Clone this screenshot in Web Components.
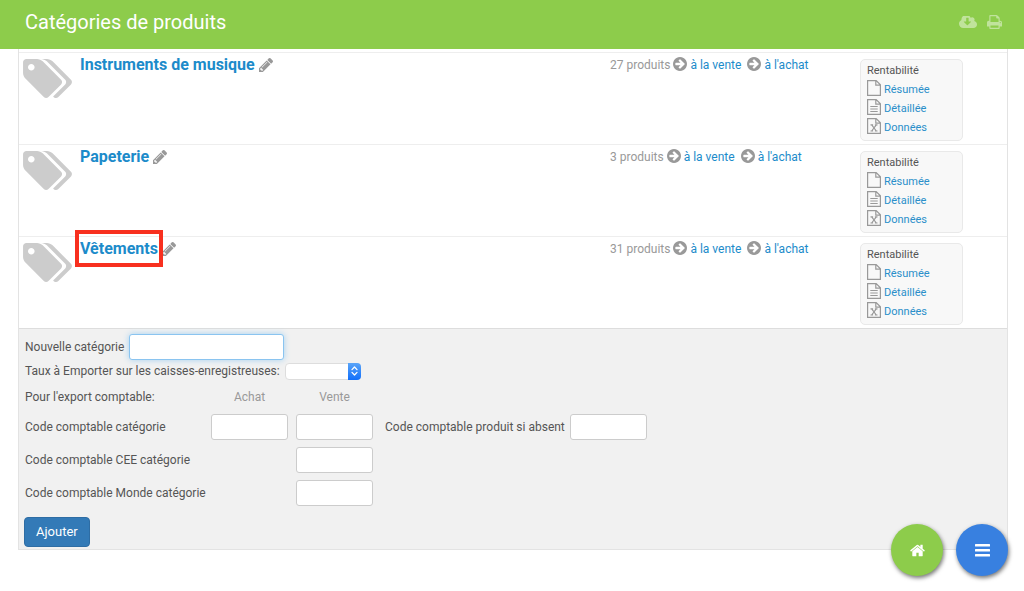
<!DOCTYPE html>
<html lang="fr">
<head>
<meta charset="utf-8">
<meta name="viewport" content="width=device-width, initial-scale=1">
<title>Catégories de produits</title>
<style>
  html { background: #fff; }
  body { margin: 0; font: 12px/20px Roboto, "Liberation Sans", sans-serif; color: #555; }
</style>
</head>
<body>
<category-page></category-page>

<script>
const ICONS = {
  tags: ['128 128 1899 1515', '<path d="M576 448q0-53-37.500-90.500t-90.500-37.500-90.500 37.500-37.500 90.500 37.500 90.500 90.500 37.500 90.500-37.500 37.500-90.500zm1067 576q0 53-37 90l-491 492q-39 37-91 37-53 0-90-37l-715-716q-38-37-64.500-101t-26.500-117v-416q0-52 38-90t90-38h416q53 0 117 26.500t102 64.500l715 714q37 39 37 91zm384 0q0 53-37 90l-491 492q-39 37-91 37-36 0-59-14t-53-45l470-470q37-37 37-90 0-52-37-91l-715-714q-38-38-102-64.500t-117-26.500h224q53 0 117 26.500t102 64.500l715 714q37 39 37 91z"/>'],
  pencil: ['128 149 1515 1515', '<path d="M491 1536l91-91-235-235-91 91v107h128v128h107zm523-928q0-22-22-22-10 0-17 7l-542 542q-7 7-7 17 0 22 22 22 10 0 17-7l542-542q7-7 7-17zm-54-192l416 416-832 832h-416v-416zm683 96q0 53-37 90l-166 166-416-416 166-165q36-38 90-38 53 0 91 38l235 234q37 39 37 91z"/>'],
  arrow: ['128 128 1536 1536', '<path d="M1413 896q0-27-18-45l-91-91-362-362q-18-18-45-18t-45 18l-91 91q-18 18-18 45t18 45l189 189h-502q-26 0-45 19t-19 45v128q0 26 19 45t45 19h502l-189 189q-19 19-19 45t19 45l91 91q18 18 45 18t45-18l362-362 91-91q18-18 18-45zm251 0q0 209-103 385.500t-279.500 279.500-385.500 103-385.500-103-279.500-279.500-103-385.500 103-385.500 279.500-279.500 385.500-103 385.500 103 279.500 279.500 103 385.500z"/>'],
  home: ['64 192 1664 1408', '<path d="M1472 992v480q0 26-19 45t-45 19h-384v-384h-256v384h-384q-26 0-45-19t-19-45v-480q0-1 .5-3t.5-3l575-474 575 474q1 2 1 6zm223-69l-62 74q-8 9-21 11h-3q-13 0-21-7l-692-577-692 577q-12 8-24 7-13-2-21-11l-62-74q-8-10-7-23.500t11-21.500l719-599q32-26 76-26t76 26l244 204v-195q0-14 9-23t23-9h192q14 0 23 9t9 23v408l219 182q10 8 11 21.500t-7 23.500z"/>'],
  bars: ['0 0 15 13', '<rect width="15" height="2.6" rx=".5"/><rect y="5" width="15" height="2.6" rx=".5"/><rect y="10" width="15" height="2.6" rx=".5"/>'],
  cloud: ['64 256 1920 1280', '<path d="M1344 864q0-14-9-23t-23-9h-224v-352q0-13-9.500-22.500t-22.500-9.500h-192q-13 0-22.500 9.500t-9.500 22.500v352h-224q-13 0-22.500 9.500t-9.500 22.500q0 14 9 23l352 352q9 9 23 9t23-9l351-351q10-12 10-24zm640 288q0 159-112.500 271.500t-271.500 112.500h-1088q-185 0-316.500-131.500t-131.500-316.500q0-130 70-240t188-165q-2-30-2-43 0-212 150-362t362-150q156 0 285.500 87t188.500 231q71-62 166-62 106 0 181 75t75 181q0 76-41 138 130 31 213.500 135.500t83.500 238.500z"/>'],
  print: ['64 128 1664 1536', '<path d="M448 1536h896v-256h-896v256zm0-640h896v-384h-160q-40 0-68-28t-28-68v-160h-640v640zm1152 64q0-26-19-45t-45-19-45 19-19 45 19 45 45 19 45-19 19-45zm128 0v416q0 13-9.500 22.500t-22.500 9.500h-224v160q0 40-28 68t-68 28h-960q-40 0-68-28t-28-68v-160h-224q-13 0-22.500-9.500t-9.500-22.500v-416q0-79 56.500-135.500t135.500-56.500h64v-544q0-40 28-68t68-28h672q40 0 88 20t76 48l152 152q28 28 48 76t20 88v256h64q79 0 135.500 56.500t56.500 135.500z"/>'],
  file: ['0 0 14 16', '<g fill="none" stroke="currentColor" stroke-width="1.2"><path d="M.6.6h8.600l4.200 4.200v10.600H.6zM8.800.6v4.600h4.600"/></g>'],
  lines: ['0 0 14 16', '<g fill="none" stroke="currentColor" stroke-width="1.2"><path d="M.6.6h8.600l4.200 4.200v10.600H.6zM8.800.6v4.600h4.600M3.300 7.500h7.400M3.300 10h7.400M3.300 12.500h7.400"/></g>'],
  sheet: ['0 0 14 16', '<g fill="none" stroke="currentColor" stroke-width="1.2"><path d="M.6.6h8.600l4.200 4.200v10.600H.6zM8.800.6v4.600h4.600"/><path d="M4.700 6.800l4.600 6.200M9.300 6.800l-4.600 6.200M3.500 6.800h2.600M7.900 6.800h2.600M3.500 13h2.600M7.900 13h2.600"/></g>'],
  updown: ['0 0 7 10', '<path fill="none" stroke="currentColor" stroke-width="1.300" stroke-linecap="round" stroke-linejoin="round" d="M1 3.600l2.500-2.600 2.500 2.600M1 6.400l2.500 2.600 2.500-2.600"/>']
};

class AppIcon extends HTMLElement {
  connectedCallback() {
    if (this.shadowRoot) return;
    const [box, art] = ICONS[this.getAttribute('name')];
    this.attachShadow({ mode: 'open' }).innerHTML = `
      <style>
        :host { display: inline-block; width: 14px; height: 14px; flex: none; }
        svg { display: block; width: 100%; height: 100%; fill: currentColor; }
      </style>
      <svg viewBox="${box}" aria-hidden="true">${art}</svg>`;
  }
}

class PageHeader extends HTMLElement {
  constructor() {
    super();
    this.attachShadow({ mode: 'open' }).innerHTML = `
      <style>
        :host { display: flex; align-items: center; justify-content: space-between; box-sizing: border-box;
                min-height: 49px; padding: 0 22px 6px 25px; background: #8dcc4b; color: #fff; }
        h1 { margin: 0; font-size: 20px; line-height: 28px; font-weight: 400; }
        nav { display: flex; align-items: center; gap: 10px; }
        button { display: flex; padding: 0; border: 0; background: none; color: #fff; opacity: .45; cursor: pointer; }
        .cloud { width: 18px; height: 12px; }
        .print { width: 15px; height: 14px; }
      </style>
      <h1><slot></slot></h1>
      <nav>
        <button type="button" aria-label="Télécharger"><app-icon class="cloud" name="cloud"></app-icon></button>
        <button type="button" aria-label="Imprimer"><app-icon class="print" name="print"></app-icon></button>
      </nav>`;
  }
}

class ReportCard extends HTMLElement {
  constructor() {
    super();
    this.attachShadow({ mode: 'open' }).innerHTML = `
      <style>
        :host { display: block; box-sizing: border-box; width: 103px; padding: 2px 6px 3px;
                border: 1px solid #e9e9e9; border-radius: 5px; background: #f8f8f8; font-size: 11px; }
        h3 { margin: 0; font-size: 11px; line-height: 18px; font-weight: 400; color: #555; }
        ul { margin: 0; padding: 0; list-style: none; }
        li { display: flex; align-items: center; gap: 3px; line-height: 19px; height: 19px; color: #999; }
        app-icon { width: 14px; height: 16px; margin-bottom: 3px; }
        a { color: #2a8fca; text-decoration: none; }
      </style>
      <h3>Rentabilité</h3>
      <ul>
        <li><app-icon name="file"></app-icon><a href="#resume">Résumée</a></li>
        <li><app-icon name="lines"></app-icon><a href="#detail">Détaillée</a></li>
        <li><app-icon name="sheet"></app-icon><a href="#donnees">Données</a></li>
      </ul>`;
  }
}

class CategoryRow extends HTMLElement {
  connectedCallback() {
    if (this.shadowRoot) return;
    this.attachShadow({ mode: 'open' }).innerHTML = `
      <style>
        :host { display: grid; grid-template-columns: 61px 1fr 250px 147px; box-sizing: border-box;
                min-height: 92px; border-top: 1px solid #eee; }
        .tags { width: 49px; height: 39px; margin: 6px 0 0 4px; color: #ccc; }
        .name { display: flex; align-items: center; gap: 4px; height: 24px; color: #999; }
        h2 { position: relative; margin: 0; font-size: 16px; line-height: 24px; font-weight: 700; }
        :host([highlighted]) h2::after { content: ""; position: absolute; inset: -7px -5px -6px -5px;
                border: 4px solid #f8301f; z-index: 1; }
        a { color: #1c8bca; text-decoration: none; }
        .counts { display: flex; align-items: center; height: 24px; gap: 3px; color: #999; }
        .counts app-icon { margin-bottom: 3px; }
        .counts a + app-icon { margin-left: 3px; }
        button { display: flex; padding: 0; border: 0; background: none; color: inherit; cursor: pointer; }
        report-card { margin-top: 6px; align-self: start; }
      </style>
      <app-icon class="tags" name="tags"></app-icon>
      <div class="name">
        <h2><a href="#categorie"><slot></slot></a></h2>
        <button type="button" aria-label="Modifier"><app-icon name="pencil"></app-icon></button>
      </div>
      <div class="counts">
        <span>${this.getAttribute('count')} produits</span>
        <app-icon name="arrow"></app-icon><a href="#vente">à la vente</a>
        <app-icon name="arrow"></app-icon><a href="#achat">à l'achat</a>
      </div>
      <report-card></report-card>`;
  }
}

class CategoryForm extends HTMLElement {
  constructor() {
    super();
    this.attachShadow({ mode: 'open' }).innerHTML = `
      <style>
        :host { display: block; border-top: 1px solid #ddd; background: #f1f1f1; }
        form { padding: 5px 6px 2px; }
        label { white-space: nowrap; }
        .line { display: flex; align-items: center; gap: 5px; }
        input { box-sizing: border-box; width: 77px; height: 26px; margin: 0; padding: 2px 6px; border: 1px solid #ccc;
                border-radius: 3px; background: #fff; font: inherit; color: inherit; outline: none; }
        .new { width: 155px; border-color: #8ac4f0; box-shadow: 0 0 6px #a5d2f2; }
        .rate { margin: 1px 0 6px; }
        .picker { position: relative; display: flex; width: 76px; height: 17px; }
        select { appearance: none; width: 100%; margin: 0; padding: 0 16px 0 4px; border: 1px solid #ddd;
                border-radius: 4px; background: #fff; font: inherit; line-height: 14px; color: inherit; }
        .stepper { position: absolute; inset: 0 0 0 auto; width: 13px; display: flex; align-items: center;
                justify-content: center; border-radius: 0 4px 4px 0; color: #fff; pointer-events: none;
                background: linear-gradient(#5ba5f8, #116ffb); }
        .stepper app-icon { width: 7px; height: 10px; }
        .codes { display: grid; grid-template-columns: 178px 77px 77px auto; justify-content: start;
                align-items: center; gap: 7px 8px; }
        .head { height: 20px; }
        .column { text-align: center; color: #999; }
        .missing { margin-left: 4px; }
        .sale { grid-column: 3; }
        button { margin: 11px 0 0 -1px; padding: 0 11px; height: 30px; border: 1px solid #2e6da4; border-radius: 4px;
                background: #337ab7; color: #fff; font: inherit; font-size: 13px; cursor: pointer; }
      </style>
      <form>
        <div class="line"><label for="name">Nouvelle catégorie</label><input class="new" id="name"></div>
        <div class="line rate">
          <label for="rate">Taux à Emporter sur les caisses-enregistreuses:</label>
          <span class="picker"><select id="rate"><option></option></select><span class="stepper"><app-icon name="updown"></app-icon></span></span>
        </div>
        <div class="codes">
          <span class="head">Pour l'export comptable:</span><span class="column" id="buy">Achat</span><span class="column" id="sell">Vente</span><span></span>
          <label for="code" id="code-label">Code comptable catégorie</label>
          <input id="code" aria-labelledby="code-label buy"><input aria-labelledby="code-label sell">
          <span class="line missing"><label for="missing">Code comptable produit si absent</label><input id="missing"></span>
          <label for="eec">Code comptable CEE catégorie</label><input class="sale" id="eec"><span></span>
          <label for="world">Code comptable Monde catégorie</label><input class="sale" id="world"><span></span>
        </div>
        <button type="button">Ajouter</button>
      </form>`;
  }
}

class RoundButton extends HTMLElement {
  connectedCallback() {
    if (this.shadowRoot) return;
    this.attachShadow({ mode: 'open' }).innerHTML = `
      <style>
        :host { display: block; }
        button { display: flex; align-items: center; justify-content: center; width: 52px; height: 52px; padding: 0;
                border: 0; border-radius: 50%; background: var(--fill); color: #fff; cursor: pointer;
                box-shadow: 1px 2px 4px rgba(0, 0, 0, .55); }
        app-icon { width: 15px; height: 13px; }
      </style>
      <button type="button" aria-label="${this.getAttribute('label')}"><app-icon name="${this.getAttribute('icon')}"></app-icon></button>`;
  }
}

class CategoryPage extends HTMLElement {
  constructor() {
    super();
    this.attachShadow({ mode: 'open' }).innerHTML = `
      <style>
        :host { display: block; }
        main { margin: 0 16px 0 18px; padding-top: 3px; border: 1px solid #e3e3e3; border-top: 0; }
        .floating { position: fixed; right: 16px; bottom: 15px; display: flex; gap: 13px; }
        .home { --fill: #8dcc4b; }
        .menu { --fill: #3880e0; }
      </style>
      <page-header>Catégories de produits</page-header>
      <main>
        <category-row count="27">Instruments de musique</category-row>
        <category-row count="3">Papeterie</category-row>
        <category-row count="31" highlighted>Vêtements</category-row>
        <category-form></category-form>
      </main>
      <div class="floating">
        <round-button class="home" icon="home" label="Accueil"></round-button>
        <round-button class="menu" icon="bars" label="Menu"></round-button>
      </div>`;
  }
}

customElements.define('app-icon', AppIcon);
customElements.define('page-header', PageHeader);
customElements.define('report-card', ReportCard);
customElements.define('category-row', CategoryRow);
customElements.define('category-form', CategoryForm);
customElements.define('round-button', RoundButton);
customElements.define('category-page', CategoryPage);
</script>
</body>
</html>
